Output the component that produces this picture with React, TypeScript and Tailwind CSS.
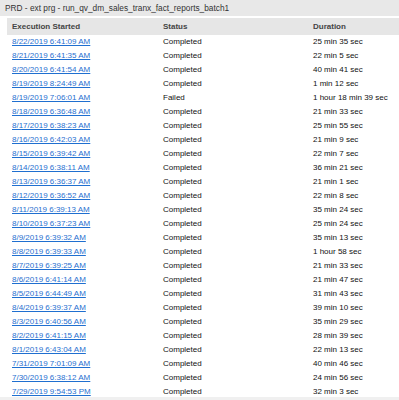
import React from "react";

const rows: [string, string, string][] = [
  ["8/22/2019 6:41:09 AM", "Completed", "25 min 35 sec"],
  ["8/21/2019 6:41:35 AM", "Completed", "22 min 5 sec"],
  ["8/20/2019 6:41:54 AM", "Completed", "40 min 41 sec"],
  ["8/19/2019 8:24:49 AM", "Completed", "1 min 12 sec"],
  ["8/19/2019 7:06:01 AM", "Failed", "1 hour 18 min 39 sec"],
  ["8/18/2019 6:36:48 AM", "Completed", "21 min 33 sec"],
  ["8/17/2019 6:38:23 AM", "Completed", "25 min 55 sec"],
  ["8/16/2019 6:42:03 AM", "Completed", "21 min 9 sec"],
  ["8/15/2019 6:39:42 AM", "Completed", "22 min 7 sec"],
  ["8/14/2019 6:38:11 AM", "Completed", "36 min 21 sec"],
  ["8/13/2019 6:36:37 AM", "Completed", "21 min 1 sec"],
  ["8/12/2019 6:36:52 AM", "Completed", "22 min 8 sec"],
  ["8/11/2019 6:39:13 AM", "Completed", "35 min 24 sec"],
  ["8/10/2019 6:37:23 AM", "Completed", "25 min 24 sec"],
  ["8/9/2019 6:39:32 AM", "Completed", "35 min 13 sec"],
  ["8/8/2019 6:39:33 AM", "Completed", "1 hour 58 sec"],
  ["8/7/2019 6:39:25 AM", "Completed", "21 min 33 sec"],
  ["8/6/2019 6:41:14 AM", "Completed", "21 min 47 sec"],
  ["8/5/2019 6:44:49 AM", "Completed", "31 min 43 sec"],
  ["8/4/2019 6:39:37 AM", "Completed", "39 min 10 sec"],
  ["8/3/2019 6:40:56 AM", "Completed", "35 min 29 sec"],
  ["8/2/2019 6:41:15 AM", "Completed", "28 min 39 sec"],
  ["8/1/2019 6:43:04 AM", "Completed", "22 min 13 sec"],
  ["7/31/2019 7:01:09 AM", "Completed", "40 min 46 sec"],
  ["7/30/2019 6:38:12 AM", "Completed", "24 min 56 sec"],
  ["7/29/2019 9:54:53 PM", "Completed", "32 min 3 sec"],
];

export default function App() {
  return (
    <div
      className="w-[399px] h-[400px] overflow-hidden bg-white flex flex-col text-[8px] text-[#111]"
      style={{ fontFamily: '"Liberation Sans", Arial, sans-serif' }}
    >
      <div className="h-[16px] shrink-0 bg-[#e8e8e8] flex items-center pl-[5px] text-[8.3px] text-[#333]">
        PRD - ext prg - run_qv_dm_sales_tranx_fact_reports_batch1
      </div>
      <div className="h-[2px] shrink-0" />
      <div className="flex-1 overflow-hidden">
        <div className="ml-[7px] h-[17px] bg-[#e6e6e6] grid grid-cols-[151px_150px_1fr] items-center pl-[5px] text-[#444] font-semibold">
          <div>Execution Started</div>
          <div>Status</div>
          <div>Duration</div>
        </div>
        {rows.map(([d, s, t], i) => (
          <div
            key={i}
            className="h-[14px] grid grid-cols-[151px_150px_1fr] items-center pl-[12px]"
          >
            <div>
              <a href="#" className="text-[#1f6fd0] underline">
                {d}
              </a>
            </div>
            <div>{s}</div>
            <div>{t}</div>
          </div>
        ))}
      </div>
      <div className="h-[3px] shrink-0 bg-[#f0f0f0]" />
    </div>
  );
}
